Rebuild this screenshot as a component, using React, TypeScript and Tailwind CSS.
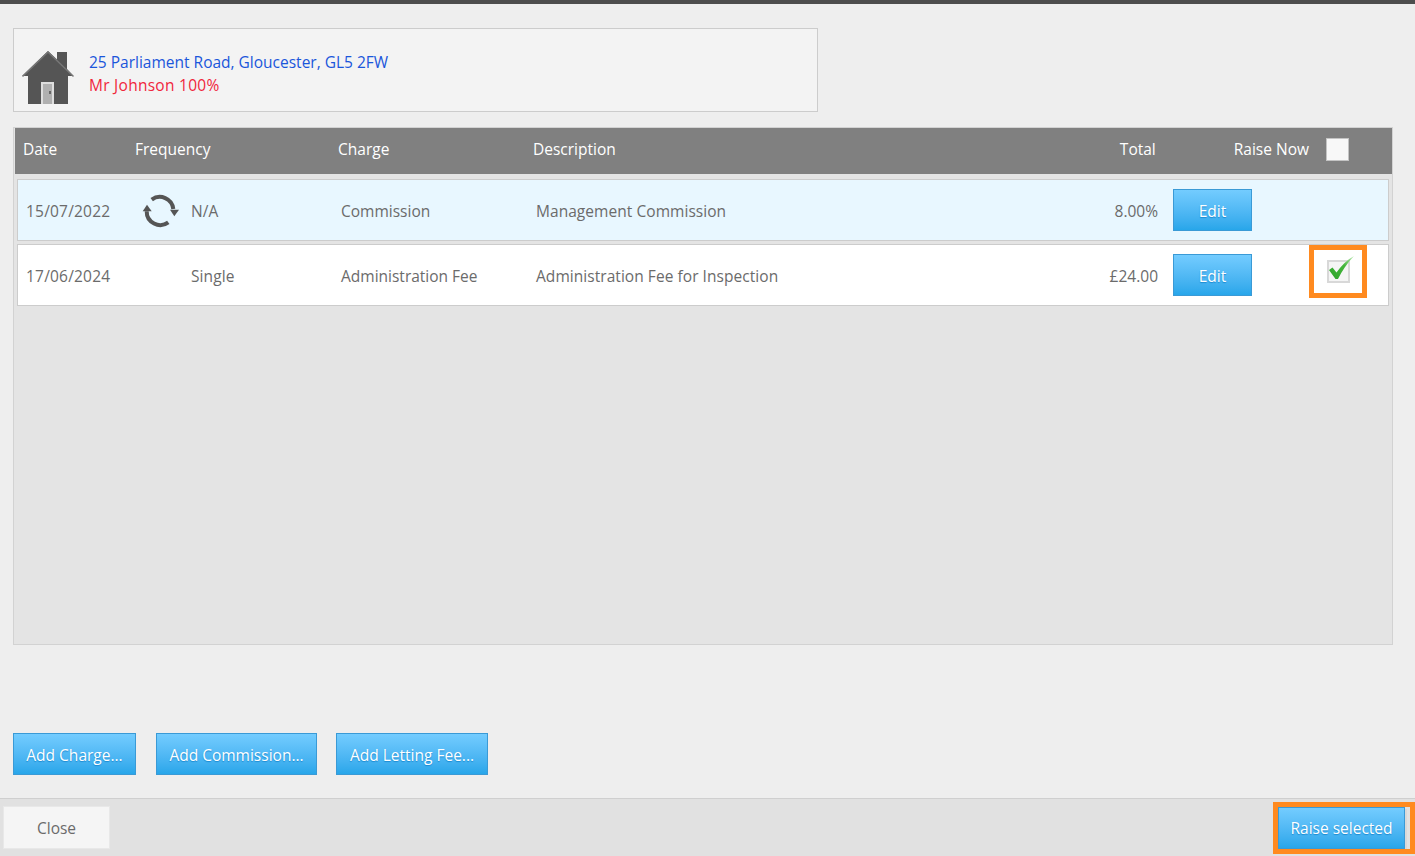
const font = { fontFamily: '"Open Sans", "Noto Sans", sans-serif' };

const rows = [
  { date: '15/07/2022', recurring: true, frequency: 'N/A', charge: 'Commission', description: 'Management Commission', total: '8.00%', tick: false },
  { date: '17/06/2024', recurring: false, frequency: 'Single', charge: 'Administration Fee', description: 'Administration Fee for Inspection', total: '£24.00', tick: true },
];

const BlueButton = ({ label, className }: { label: string; className: string }) => (
  <button className={`h-[42px] border border-[#3a9ad6] bg-gradient-to-b from-[#73ccff] to-[#27a6ea] pt-[3px] text-[15.5px] text-white [text-shadow:0_1px_1px_#1c8ad0] ${className}`}>
    {label}
  </button>
);

const HouseIcon = () => (
  <svg width="52" height="53" viewBox="0 0 52 53">
    <path d="M6 53V25H0L26 0l9 8.500V1h10v17l6.500 7H46v28z" fill="#555" />
    <path d="M0.500 25.500 26 1l25.500 24.500" fill="none" stroke="#777" strokeWidth="1.500" />
    <rect x="19" y="31" width="13" height="22" fill="#dedede" />
    <rect x="21" y="33" width="9" height="20" fill="#b0b0b0" />
    <rect x="27" y="40" width="2" height="3" fill="#666" />
  </svg>
);

const RefreshIcon = () => (
  <svg width="36" height="32" viewBox="0 0 36 32" className="-mt-[1px] overflow-visible">
    <path d="M8.700 5.700A13.500 13.500 0 0 1 30.300 15" fill="none" stroke="#555" strokeWidth="4" />
    <path d="M27 15.700h9l-4.700 6.600z" fill="#555" />
    <path d="M25.300 28.300A13.500 13.500 0 0 1 3.700 17.300" fill="none" stroke="#555" strokeWidth="4" />
    <path d="M-0.300 17.300h9L4 10.700z" fill="#555" />
  </svg>
);

export default function App() {
  return (
    <div style={font} className="flex h-[856px] flex-col overflow-hidden bg-[#eeeeee] text-[#6b6b6b]">
      <div className="h-1 bg-[#4d4d4d]" />

      <div className="flex flex-1 flex-col px-[13px] pr-[22px]">
        {/* Property */}
        <div className="mt-6 flex h-[84px] w-[805px] items-center border border-[#cccccc] bg-[#f3f3f3] pl-2 pt-[14px]">
          <HouseIcon />
          <div className="ml-[15px] -mt-[10px] pt-[3px] text-[15.5px] leading-[23px]">
            <div className="text-[#1a56db]">25 Parliament Road, Gloucester, GL5 2FW</div>
            <div className="tracking-[0.27px] text-[#f0263c]">Mr Johnson 100%</div>
          </div>
        </div>

        {/* Charges */}
        <div className="mt-[15px] flex h-[518px] flex-col border border-[#d2d2d2] bg-[#e4e4e4] pl-[1px]">
          <div className="flex h-[46px] items-center bg-[#808080] pb-[2px] text-[15.5px] text-white">
            <div className="ml-2 w-[112px]">Date</div>
            <div className="w-[203px]">Frequency</div>
            <div className="w-[195px]">Charge</div>
            <div className="flex-1">Description</div>
            <div className="mr-[78px]">Total</div>
            <div className="mr-[17px]">Raise Now</div>
            <div className="mr-[43px] -mt-[2px] h-[23px] w-[23px] border border-[#c4c4c4] bg-[#f8f8f8]" />
          </div>

          <div className="ml-[2px] mr-[3px] mt-[5px] flex flex-col gap-[3px]">
            {rows.map((row) => (
              <div
                key={row.date}
                className={`flex h-[62px] items-center border border-[#cccccc] pl-2 text-[15.5px] ${row.tick ? 'bg-white' : 'bg-[#e8f7ff]'}`}
              >
                <div className="w-[117px] pt-1 tracking-[0.2px]">{row.date}</div>
                <div className="w-[48px]">{row.recurring && <RefreshIcon />}</div>
                <div className="w-[150px] pt-1 tracking-[0.1px]">{row.frequency}</div>
                <div className="w-[195px] pt-1">{row.charge}</div>
                <div className="flex-1 pt-1 tracking-[0.05px]">{row.description}</div>
                <div className="pt-1">{row.total}</div>
                <BlueButton label="Edit" className="ml-[15px] w-[79px]" />
                <div className="ml-[75px] mr-[38px] h-[23px] w-[23px]">
                  {row.tick && (
                    <div className="relative -top-[4px] h-[23px] w-[23px] border-2 border-[#d8d8d8] bg-[#f5f5f5]">
                      <svg width="26" height="25" viewBox="0 0 26 25" className="absolute -left-[1px] -top-[6px]">
                        <defs>
                          <linearGradient id="tick" x1="1" y1="0" x2="0" y2="1">
                            <stop offset="0" stopColor="#c4ecbb" />
                            <stop offset="0.4" stopColor="#45b53c" />
                            <stop offset="1" stopColor="#2ea52a" />
                          </linearGradient>
                        </defs>
                        <path d="M1 14l3.500-2.500 4 5C13 10 19 4 26 0 19 7 14 15 10 23H7.500z" fill="url(#tick)" />
                      </svg>
                      <div className="absolute -left-[20px] -top-[17px] h-[53px] w-[58px] border-[5px] border-[#ff8a1f]" />
                    </div>
                  )}
                </div>
              </div>
            ))}
          </div>
        </div>

        <div className="mt-[88px] flex gap-[19px]">
          <BlueButton label="Add Charge..." className="mr-[1px] w-[123px]" />
          <BlueButton label="Add Commission..." className="w-[161px]" />
          <BlueButton label="Add Letting Fee..." className="w-[152px]" />
        </div>
      </div>

      {/* Footer */}
      <div className="flex h-[58px] items-center justify-between border-t border-[#cfcfcf] bg-[#e1e1e1] pl-[3px] pr-[10px]">
        <button className="h-[43px] w-[107px] border border-[#e8e8e8] bg-[#f5f5f5] pt-[2px] text-[15.5px]">Close</button>
        <div className="relative">
          <BlueButton label="Raise selected" className="w-[127px] shadow-[2px_2px_0_#d8d8d8]" />
          <div className="absolute -bottom-[5px] -left-[5px] -right-[10px] -top-[5px] border-[5px] border-[#ff8a1f]" />
        </div>
      </div>
    </div>
  );
}
